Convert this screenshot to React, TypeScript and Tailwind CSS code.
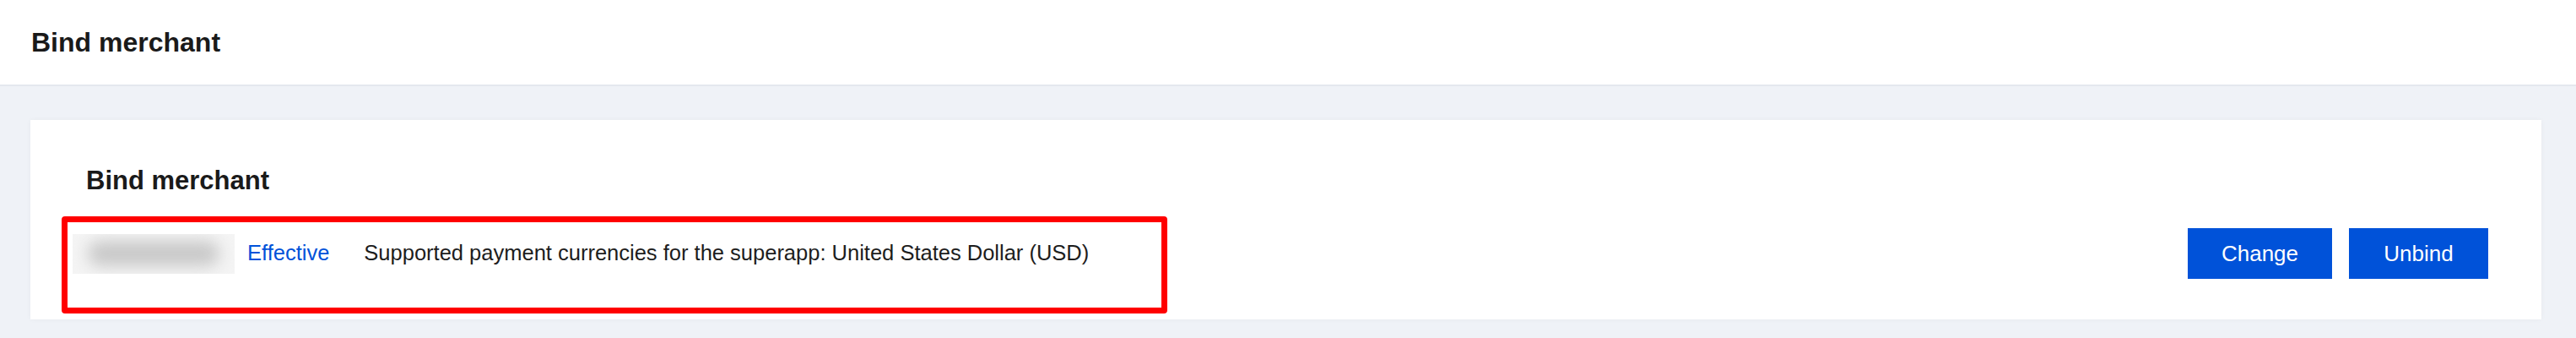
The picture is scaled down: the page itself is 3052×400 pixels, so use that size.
export default function App() {
  return (
    <div className="min-h-[400px] bg-[#eff2f7] font-['Liberation_Sans',Arial,sans-serif]">
      {/* Page header */}
      <div className="flex h-[102px] items-center border-b-2 border-[#e4e8ee] bg-white pl-[37px]">
        <h1 className="text-[32px] font-bold leading-none text-[#1a1a1a]">Bind merchant</h1>
      </div>

      <div className="pl-[36px] pr-[41px] pt-[40px]">
        <div className="relative bg-white pb-[48px] pl-[66px] pr-[63px] pt-[56px] shadow-[0_0_6px_rgba(0,0,0,0.04)]">
          <h2 className="text-[31px] font-bold leading-[31px] text-[#1a1a1a]">Bind merchant</h2>

          <div className="mt-[41px] flex h-[60px] items-center justify-between">
            <div className="flex items-center">
              {/* masked merchant id */}
              <div className="-ml-[16px] flex h-[47px] w-[192px] items-center overflow-hidden bg-[#f4f4f4] px-[18px]">
                <div className="h-[30px] w-full rounded-full bg-[#c9c9c9] blur-[9px]" />
              </div>
              <span className="ml-[15px] text-[25.5px] leading-none text-[#0052d9]">Effective</span>
              <span className="ml-[41px] text-[25.5px] leading-none text-[#1d1d1d]">
                Supported payment currencies for the superapp: United States Dollar (USD)
              </span>
            </div>

            <div className="flex items-center gap-[20px]">
              <button className="h-[60px] w-[171px] bg-[#0052d9] text-[26px] text-white">Change</button>
              <button className="h-[60px] w-[165px] bg-[#0052d9] text-[26px] text-white">Unbind</button>
            </div>
          </div>

          {/* highlight annotation */}
          <div className="pointer-events-none absolute left-[37px] top-[114px] h-[115px] w-[1310px] rounded-[4px] border-[7px] border-[#ff0000]" />
        </div>
      </div>
    </div>
  )
}
